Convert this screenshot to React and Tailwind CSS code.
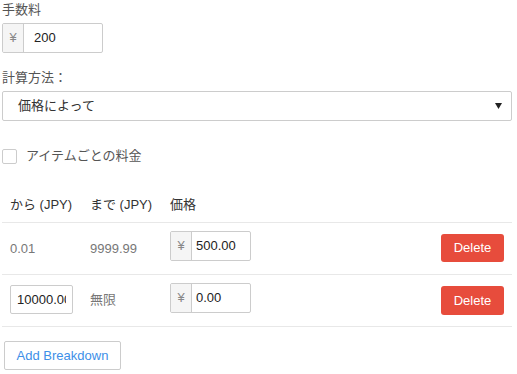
import React from "react";

const font = { fontFamily: '"Liberation Sans", "Noto Sans CJK JP", sans-serif' };

const YenInput = ({ value, width = "w-[81px]", pad = "pl-[4px]" }) => (
  <div className={`flex h-[30px] ${width} border border-[#ccc] rounded-[2px] overflow-hidden`}>
    <span className="w-[21px] shrink-0 flex items-center justify-center bg-[#f5f5f5] border-r border-[#ccc] text-[#888] text-[13px]">
      ¥
    </span>
    <input
      defaultValue={value}
      className={`min-w-0 flex-1 ${pad} text-[13px] text-[#222] outline-none`}
    />
  </div>
);

const DeleteButton = ({ h }) => (
  <button className={`w-[63px] ${h} bg-[#e74c3c] text-white text-[13px] rounded-[3px]`}>
    Delete
  </button>
);

export default function App() {
  return (
    <div className="w-[517px] h-[374px] bg-white overflow-hidden px-[2px]" style={font}>
      {/* 手数料 */}
      <div className="mt-[1px] h-[18px] leading-[18px] text-[13px] text-[#555]">手数料</div>
      <div className="mt-[4px]">
        <YenInput value="200" width="w-[101px]" pad="pl-[10px]" />
      </div>

      {/* 計算方法 */}
      <div className="mt-[16px] h-[18px] leading-[18px] text-[13px] text-[#555]">計算方法：</div>
      <div className="mt-[4px] relative w-[510px] h-[30px] border border-[#ccc] rounded-[2px] flex items-center pl-[15px] text-[13px] text-[#333]">
        価格によって
        <svg className="absolute right-[9px] top-[11px]" width="7" height="6" viewBox="0 0 7 6">
          <polygon points="0,0 7,0 3.5,6" fill="#222" />
        </svg>
      </div>

      {/* checkbox */}
      <div className="mt-[26px] h-[18px] flex items-center gap-[9px]">
        <span className="w-[15px] h-[15px] border border-[#ccc] rounded-[2px] bg-white" />
        <span className="text-[13px] text-[#555]">アイテムごとの料金</span>
      </div>

      {/* table */}
      <div className="mt-[19px] w-[510px] text-[13px]">
        <div className="h-[39px] flex items-center border-b border-[#e8e8e8] text-[#333] pt-[3px]">
          <span className="w-[80px] pl-[8px]">から (JPY)</span>
          <span className="w-[80px] pl-[8px]">まで (JPY)</span>
          <span className="pl-[8px]">価格</span>
        </div>

        <div className="h-[52px] flex items-start border-b border-[#e8e8e8]">
          <span className="w-[80px] pl-[8px] mt-[16px] text-[#777]">0.01</span>
          <span className="w-[80px] pl-[8px] mt-[16px] text-[#777]">9999.99</span>
          <div className="pl-[8px] mt-[8px]">
            <YenInput value="500.00" />
          </div>
          <div className="ml-auto mr-[8px] mt-[11px]">
            <DeleteButton h="h-[28px]" />
          </div>
        </div>

        <div className="h-[52px] flex items-start border-b border-[#e8e8e8]">
          <div className="w-[80px] pl-[8px] mt-[10px]">
            <input
              defaultValue="10000.00"
              className="w-[63px] h-[29px] border border-[#ccc] rounded-[2px] pl-[6px] pr-[6px] text-[13px] text-[#222] outline-none"
            />
          </div>
          <span className="w-[80px] pl-[8px] mt-[15px] text-[#777]">無限</span>
          <div className="pl-[8px] mt-[8px]">
            <YenInput value="0.00" />
          </div>
          <div className="ml-auto mr-[8px] mt-[11px]">
            <DeleteButton h="h-[29px]" />
          </div>
        </div>
      </div>

      <button className="mt-[14px] ml-[2px] w-[117px] h-[29px] border border-[#ccc] rounded-[2px] text-[13px] text-[#3d8fe8] bg-white">
        Add Breakdown
      </button>
    </div>
  );
}
